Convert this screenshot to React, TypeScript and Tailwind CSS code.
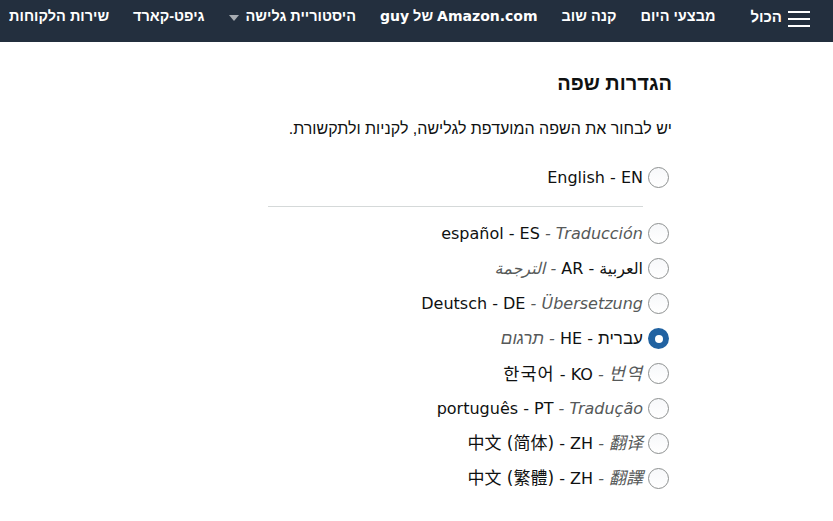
import React from "react";

const HEB = "font-['Liberation_Sans','DejaVu_Sans',sans-serif]";
const LAT = "font-['DejaVu_Sans','Noto_Sans_CJK_SC',sans-serif]";

const navItems = [
  { label: "מבצעי היום" },
  { label: "קנה שוב" },
  { label: "guy", he: "של", latin: "Amazon.com" },
  { label: "היסטוריית גלישה", caret: true },
  { label: "גיפט-קארד" },
  { label: "שירות הלקוחות" },
];

// script: some scripts render a bit larger than the latin text
const languages = [
  { name: "español", code: "ES", tr: "Traducción" },
  { name: "العربية", code: "AR", tr: "الترجمة" },
  { name: "Deutsch", code: "DE", tr: "Übersetzung" },
  { name: "עברית", code: "HE", tr: "תרגום", checked: true, script: "he" },
  { name: "한국어", code: "KO", tr: "번역", script: "ko" },
  { name: "português", code: "PT", tr: "Tradução" },
  { name: "中文 (简体)", code: "ZH", tr: "翻译", script: "zh" },
  { name: "中文 (繁體)", code: "ZH", tr: "翻譯", script: "zh" },
];

const scriptClass: Record<string, string> = {
  he: `${HEB} text-[17px]`,
  ko: "font-['Noto_Sans_CJK_KR',sans-serif] text-[17.5px] tracking-[1px]",
  zh: "text-[17px]",
};

function Radio({ checked }: { checked?: boolean }) {
  if (checked) {
    return (
      <span className="flex h-[21px] w-[21px] shrink-0 items-center justify-center rounded-full bg-[#2162a1]">
        <span className="h-[8px] w-[8px] rounded-full bg-white" />
      </span>
    );
  }
  return (
    <span className="h-[21px] w-[21px] shrink-0 rounded-full border border-[#8d9090] bg-gradient-to-b from-[#f7f8fa] to-white" />
  );
}

function LangRow({
  name,
  code,
  tr,
  checked,
  script,
}: {
  name: string;
  code: string;
  tr?: string;
  checked?: boolean;
  script?: string;
}) {
  const sc = script ? scriptClass[script] : "";
  return (
    <label className="flex h-[35px] items-center gap-[5px]">
      <Radio checked={checked} />
      <span dir="auto" className={`text-[16px] text-[#0f1111] ${LAT}`}>
        <span className={sc}>{name}</span> - {code}
        {tr && (
          <span className="italic text-[#565959]">
            {" "}- <span className={sc}>{tr}</span>
          </span>
        )}
      </span>
    </label>
  );
}

export default function App() {
  return (
    <div dir="rtl" className={`min-h-screen bg-white ${HEB}`}>
      <nav className="flex h-[42px] items-start overflow-hidden whitespace-nowrap bg-[#232f3e] pr-[23px] pt-[6px] text-[14.5px] font-bold text-white">
        <div className="ml-[35px] flex items-center gap-[6px]">
          <svg width="22" height="18" viewBox="0 0 22 18" className="mt-[1px]">
            <rect x="0" y="2" width="22" height="2" fill="white" />
            <rect x="0" y="9" width="22" height="2" fill="white" />
            <rect x="0" y="16" width="22" height="2" fill="white" />
          </svg>
          <span className="text-[15px]">הכול</span>
        </div>
        <div className="flex items-center gap-[24px]">
          {navItems.map((item) => (
            <div key={item.label} className="flex items-center gap-[7px]">
              {item.latin ? (
                <span>
                  <span className={`${LAT} text-[14px]`}>{item.latin}</span> {item.he}{" "}
                  <span className={`${LAT} text-[14px]`}>{item.label}</span>
                </span>
              ) : (
                <span>{item.label}</span>
              )}
              {item.caret && (
                <svg width="10" height="6" viewBox="0 0 10 6" className="mt-[2px]">
                  <path d="M0 0 L10 0 L5 6 Z" fill="#a7acb2" />
                </svg>
              )}
            </div>
          ))}
        </div>
      </nav>

      <main className="mr-[161px] w-[404px] pt-[29px]">
        <h1 className="text-[20px] font-bold leading-[24px] text-[#0f1111]">הגדרות שפה</h1>
        <p className="mt-[24px] text-[16px] leading-[20px] text-[#0f1111]">
          יש לבחור את השפה המועדפת לגלישה, לקניות ולתקשורת.
        </p>
        <div className="mt-[21px] pr-[3px]">
          <LangRow name="English" code="EN" />
          <div className="mr-[26px] mt-[11px] border-t border-[#d5d9d9]" />
          <div className="mt-[9px]">
            {languages.map((l, i) => (
              <LangRow key={i} {...l} />
            ))}
          </div>
        </div>
      </main>
    </div>
  );
}
